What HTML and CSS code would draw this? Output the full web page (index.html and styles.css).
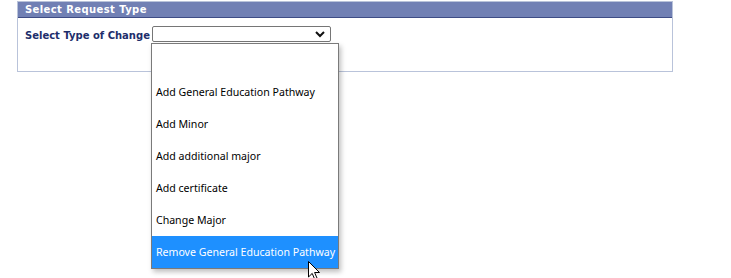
FILE: index.html
```html
<!DOCTYPE html>
<html lang="en">
<head>
    <meta charset="UTF-8">
    <title>Select Request Type</title>
    <link rel="stylesheet" href="styles.css">
</head>
<body>
    <div class="panel">
        <div class="panel-title">Select Request Type</div>
        <div class="panel-body">
            <div class="field">
                <span class="field-label">Select Type of Change</span>
                <div class="select-box">
                    <svg class="chevron" width="10" height="7" viewBox="0 0 10 7">
                        <path d="M1 1 L5 5 L9 1" fill="none" stroke="#111" stroke-width="2"/>
                    </svg>
                    <ul class="options">
                        <li></li>
                        <li>Add General Education Pathway</li>
                        <li>Add Minor</li>
                        <li>Add additional major</li>
                        <li>Add certificate</li>
                        <li>Change Major</li>
                        <li class="selected">Remove General Education Pathway</li>
                    </ul>
                    <svg class="cursor" width="13" height="20" viewBox="0 0 13 20">
                        <path d="M0.5 0.5 L0.5 16 L4.2 12.4 L6.8 18.5 L9.2 17.5 L6.6 11.5 L11.5 11.5 Z" fill="#fff" stroke="#000" stroke-width="1"/>
                    </svg>
                </div>
            </div>
        </div>
    </div>
</body>
</html>
```

FILE: styles.css
```css
html, body {
    height: 100%;
}

body {
    margin: 0;
    min-height: 278px;
    background: #fff;
    font-family: 'DejaVu Sans', Verdana, sans-serif;
}

.panel {
    margin: 1px 0 0 17px;
    width: 654px;
    height: 69px;
    border: 1px solid #b9c3da;
}

.panel-title {
    background-color: #7180b4;
    border-bottom: 1px solid #3e4c85;
    color: #fff;
    font-weight: bold;
    font-size: 10px;
    height: 15px;
    line-height: 15px;
    padding-left: 7px;
    letter-spacing: 0.4px;
}

.panel-body {
    padding: 8px 0 0 7px;
}

.field {
    display: flex;
    align-items: center;
    gap: 2px;
}

.field-label {
    color: #1d2e6b;
    font-weight: bold;
    font-size: 10px;
    padding-top: 3px;
}

.select-box {
    position: relative;
    width: 177px;
    height: 14px;
    border: 1px solid #767676;
    border-radius: 2px;
    background: #fff;
}

.chevron {
    position: absolute;
    right: 5px;
    top: 4px;
}

.options {
    position: absolute;
    left: -2px;
    top: 16px;
    width: 186px;
    margin: 0;
    padding: 0;
    list-style: none;
    background: #fff;
    border: 1px solid #7a7a7a;
    box-shadow: 2px 3px 5px rgba(0, 0, 0, 0.25);
    font-family: 'Noto Sans', 'Open Sans', sans-serif;
    font-size: 10.6px;
    color: #000;
    z-index: 2;
}

.options li {
    height: 32px;
    line-height: 33px;
    padding-left: 4px;
    white-space: nowrap;
}

.options li.selected {
    background-color: #1e90ff;
    color: #fff;
}

.cursor {
    position: absolute;
    left: 155px;
    top: 234px;
    z-index: 3;
}
```
